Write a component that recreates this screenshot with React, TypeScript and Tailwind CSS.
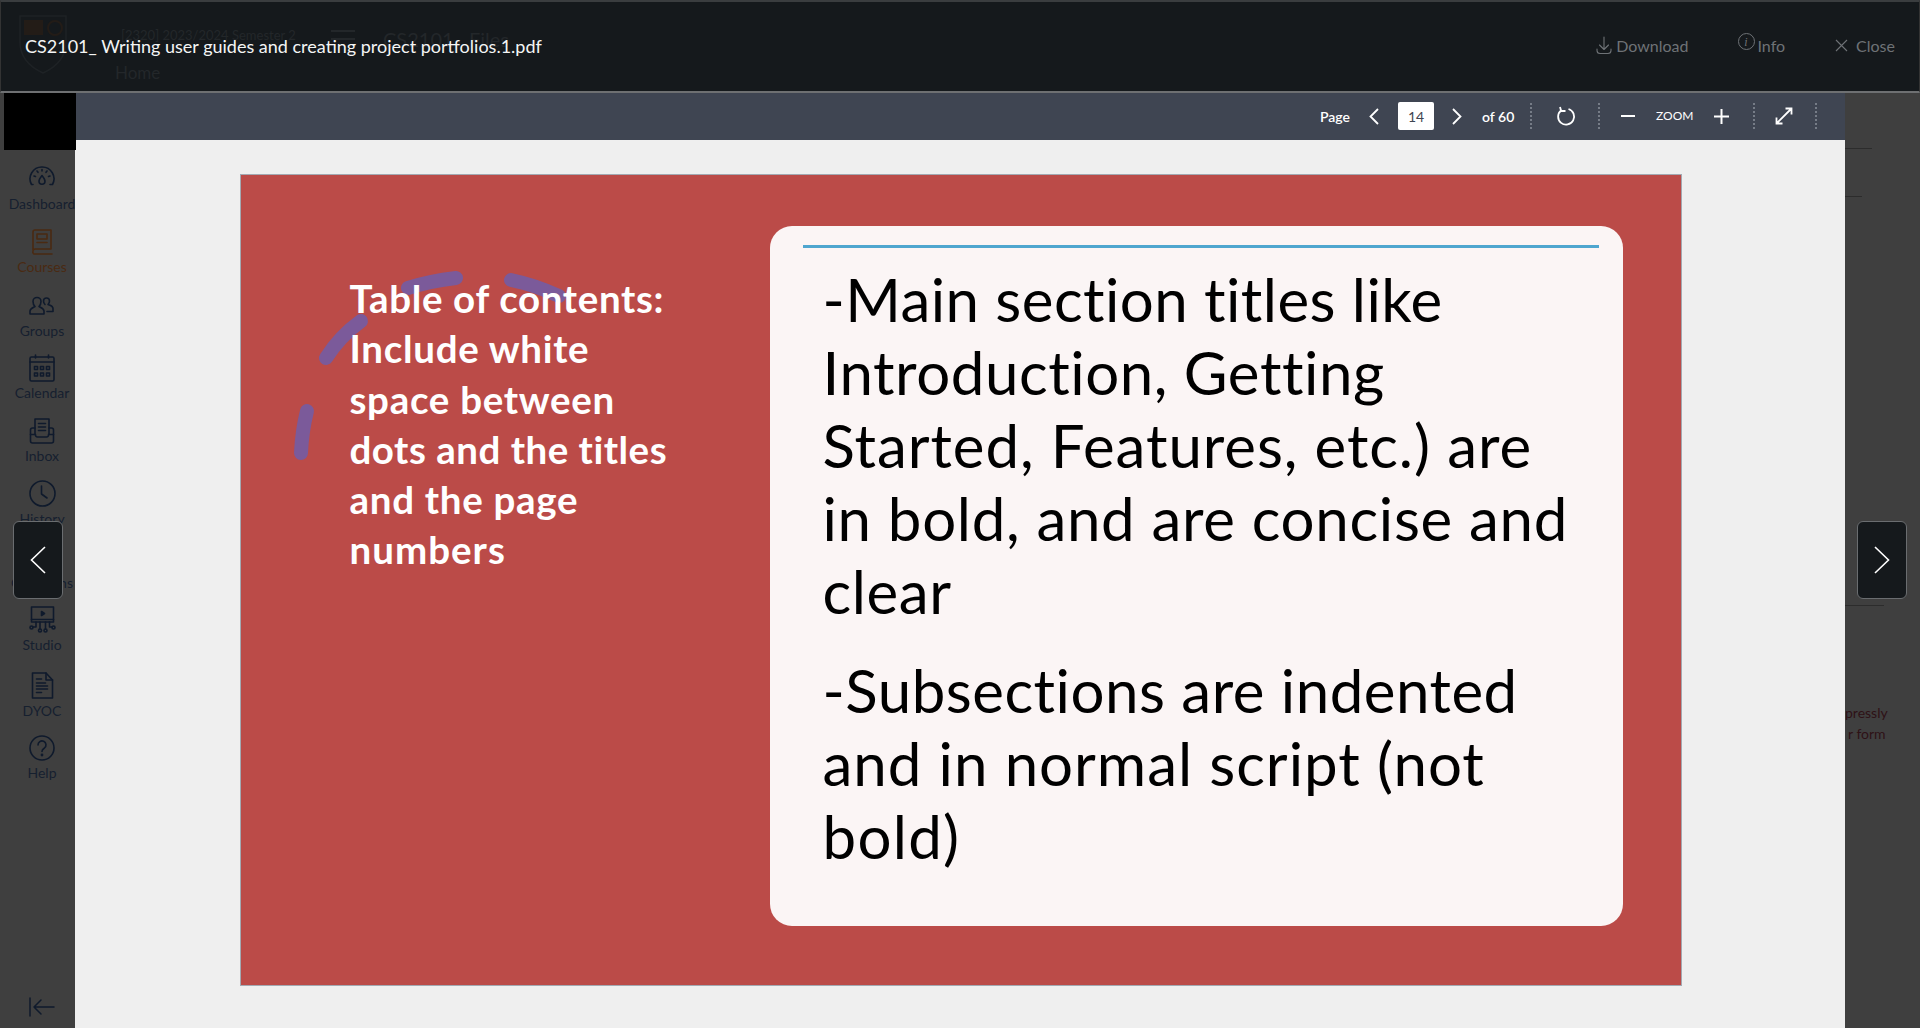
import React from "react";

const navy = "#0f1a2c";

function Svg({ children, w = 28, h = 28, box = "0 0 28 28", color = navy, sw = 1.6 }: { children: React.ReactNode; w?: number; h?: number; box?: string; color?: string; sw?: number }) {
  return (
    <svg width={w} height={h} viewBox={box} fill="none" stroke={color} strokeWidth={sw} strokeLinecap="round" strokeLinejoin="round">
      {children}
    </svg>
  );
}

const Dashboard = () => (
  <span className="relative -top-[3px] flex">
    <Svg w={26} h={20} box="0 0 26 20">
      <path d="M4 18.5h-1.5A11.8 11.8 0 0 1 13 1a11.8 11.8 0 0 1 10.500 17.500H21" />
      <path d="M13 9.500c-2 2.500-3 4.200-3 5.700a3 3 0 0 0 6 0c0-1.500-1-3.200-3-5.700z" />
      <path d="M5 10l1.500.5M8 5l1 1.300M13 3.500v1.500M18 5l-1 1.300M21 10l-1.500.5" />
    </Svg>
  </span>
);
const Courses = () => (
  <Svg w={22} h={26} box="0 0 22 26" color="#4a2a12">
    <path d="M2 21V3a2 2 0 0 1 2-2h16v19H4a2 2 0 0 0-2 2.200A2 2 0 0 0 4 25h17" />
    <rect x="6" y="5" width="10" height="5" />
    <path d="M6 13.500h10" />
  </Svg>
);
const Groups = () => (
  <span className="relative -top-[1px] flex">
    <Svg w={28} h={20} box="0 0 28 20">
      <path d="M2 19v-3c0-2.500 3-3.500 5-4.500-1.500-1.500-2-3-2-5a4 4 0 0 1 8 0c0 2-.5 3.500-2 5 2 1 5 2 5 4.500v3z" />
      <path d="M17 9.500c-1-1-1.500-2-1.500-3.500a3 3 0 0 1 6 0c0 1.500-.5 2.500-1.500 3.500 2 1 5 1.500 5 4v3h-6" />
    </Svg>
  </span>
);
const Calendar = () => (
  <Svg w={26} h={28} box="0 0 26 28">
    <rect x="1" y="3" width="24" height="24" rx="1.500" />
    <path d="M1 8h24M6.500 1v3M19.500 1v3" />
    <path d="M5.500 12.500h3v3h-3zM11.500 12.500h3v3h-3zM17.500 12.500h3v3h-3zM5.500 19h3v3h-3zM11.500 19h3v3h-3zM17.500 19h3v3h-3z" />
  </Svg>
);
const Inbox = () => (
  <Svg w={26} h={26} box="0 0 26 26">
    <path d="M6 16V1h14v15" />
    <path d="M9.500 5.500h7M9.500 9h7M9.500 12.500h7" />
    <path d="M6 10H3.500A2 2 0 0 0 1.500 12v11a2 2 0 0 0 2 2h19a2 2 0 0 0 2-2V12a2 2 0 0 0-2-2H20" />
    <path d="M1.500 16.500h5a2 2 0 0 0 2 2.500h9a2 2 0 0 0 2-2.500h5" />
  </Svg>
);
const History = () => (
  <Svg w={27} h={27} box="0 0 27 27">
    <circle cx="13.500" cy="13.500" r="12.500" />
    <path d="M12.500 6v8l5.500 4" />
  </Svg>
);
const Commons = () => (
  <Svg w={26} h={22} box="0 0 26 22">
    <path d="M14 1a10 10 0 1 0 0 20h0l-4-5h4a5 5 0 0 0 0-10h-4z" />
    <path d="M16 6l9 5-9 5" />
  </Svg>
);
const Studio = () => (
  <Svg w={27} h={27} box="0 0 27 27">
    <rect x="2.500" y="1" width="22" height="15" />
    <path d="M2.500 13.500h22" />
    <path d="M12.500 5.500l3 2-3 2z" fill={navy} />
    <path d="M7 16v5H3.500M11 16v7M16.500 16v7M20.500 16v5H23.500" />
    <circle cx="2.500" cy="21.500" r="1.500" />
    <circle cx="11" cy="24.500" r="1.500" />
    <circle cx="16.500" cy="24.500" r="1.500" />
    <circle cx="24.500" cy="21.500" r="1.500" />
  </Svg>
);
const Dyoc = () => (
  <Svg w={23} h={27} box="0 0 23 27">
    <path d="M1.500 1h13.500l6.500 7v18H1.500z" />
    <path d="M15 1v7h6.500" />
    <path d="M5.500 7h5M5.500 11h9M5.500 14h11M5.500 17h11M5.500 20.500h5" />
  </Svg>
);
const Help = () => (
  <Svg w={26} h={26} box="0 0 26 26">
    <circle cx="13" cy="13" r="12" />
    <path d="M9 10a4 4 0 1 1 6.500 3c-1.500 1-2.500 1.500-2.500 3.500" />
    <circle cx="13" cy="20" r=".6" fill={navy} />
  </Svg>
);

const items: { label: string; icon: React.ReactNode; cls: string; text?: string }[] = [
  { label: "Dashboard", icon: <Dashboard />, cls: "h-[63px]" },
  { label: "Courses", icon: <Courses />, cls: "h-[63px]", text: "text-[#4a2a12]" },
  { label: "Groups", icon: <Groups />, cls: "h-[63px] pt-[1px]" },
  { label: "Calendar", icon: <Calendar />, cls: "h-[63px]" },
  { label: "Inbox", icon: <Inbox />, cls: "h-[63px]" },
  { label: "History", icon: <History />, cls: "h-[63px]" },
  { label: "Commons", icon: <Commons />, cls: "h-[63px] pt-[1px]" },
  { label: "Studio", icon: <Studio />, cls: "h-[66px]" },
  { label: "DYOC", icon: <Dyoc />, cls: "h-[62px]" },
  { label: "Help", icon: <Help />, cls: "h-[63px]" },
];

const Dots = () => <span className="h-[26px] border-l-2 border-dotted border-[#767c87]" />;

export default function App() {
  return (
    <div className="relative h-[1028px] w-[1920px] overflow-hidden bg-[#3f3f3f] font-['Lato',sans-serif]">
      <header className="relative flex h-[93px] items-center justify-between border-t-2 border-b-2 border-l border-r border-t-[#3a3d3f] border-b-[#6e7072] border-l-[#333] border-r-[#333] bg-[#15191c] pb-[2px] pl-[24px] pr-[24px]">
        {/* dimmed page behind the overlay */}
        <svg className="absolute left-[18px] top-[13px]" width="48" height="60" viewBox="0 0 48 60" fill="none">
          <path d="M1 1h46v26c0 15-10 25-23 31C11 52 1 42 1 27z" stroke="#1e2225" strokeWidth="1.500" />
          <rect x="5" y="5" width="19" height="15" fill="#231c17" />
          <circle cx="36" cy="13" r="7" stroke="#231c17" strokeWidth="2" />
        </svg>
        <span className="absolute left-[120px] top-[24px] text-[13px] text-[#23272a]">[2320] 2023/2024 Semester 2</span>
        <span className="absolute left-[330px] top-[28px] h-[10px] w-[24px] border-y-2 border-[#23272a]" />
        <span className="absolute left-[382px] top-[22px] text-[20px] text-[#23272a]">CS2101</span>
        <span className="absolute left-[468px] top-[22px] text-[20px] text-[#23272a]">Files</span>
        <span className="absolute left-[114px] top-[58px] text-[17px] text-[#23272a]">Home</span>

        <h1 className="relative text-[18px] font-normal leading-[24px] text-[#f4f5f5]">CS2101_ Writing user guides and creating project portfolios.1.pdf</h1>
        <div className="relative flex items-center text-[16px] text-[#6e7276]">
          <span className="flex items-center">
            <svg width="16" height="19" viewBox="0 0 16 19" fill="none" stroke="#6e7276" strokeWidth="1.100" strokeLinecap="round" strokeLinejoin="round">
              <path d="M8 1v12M3.500 9l4.500 4.500 4.500-4.500M1 13v1.500a3 3 0 0 0 3 3h8a3 3 0 0 0 3-3V13" />
            </svg>
            <span className="ml-[4px]">Download</span>
          </span>
          <span className="ml-[49px] flex items-center">
            <span className="relative -top-[4px] flex h-[17px] w-[17px] items-center justify-center rounded-full border border-[#6e7276] font-['Liberation_Serif',serif] text-[12px] italic">i</span>
            <span className="ml-[3px]">Info</span>
          </span>
          <span className="ml-[50px] flex items-center">
            <svg width="13" height="13" viewBox="0 0 13 13" stroke="#6e7276" strokeWidth="1.100"><path d="M1 1l11 11M12 1L1 12" /></svg>
            <span className="ml-[8px]">Close</span>
          </span>
        </div>
      </header>

      <div className="flex h-[935px]">
        <nav className="flex w-[75px] shrink-0 flex-col items-center pl-[9px] pt-[71px] text-[14px] leading-[18px] text-[#16202f]">
          {items.map((it) => (
            <div key={it.label} className={`flex w-full shrink-0 flex-col items-center ${it.cls} ${it.text ?? ""}`}>
              <span className="flex h-[29px] items-center">{it.icon}</span>
              <span className="mt-[2px] whitespace-nowrap">{it.label}</span>
            </div>
          ))}
          <div className="mt-auto mb-[11px]">
            <svg width="26" height="20" viewBox="0 0 26 20" fill="none" stroke={navy} strokeWidth="1.500" strokeLinecap="round" strokeLinejoin="round">
              <path d="M1 1v18M25 10H5M12 3l-7 7 7 7" />
            </svg>
          </div>
        </nav>

        <main className="flex w-[1770px] shrink-0 flex-col">
          <div className="flex h-[47px] shrink-0 items-center bg-[#3f4552] pb-[1px] pl-[1245px] text-[14px] text-white">
            <span className="w-[30px] whitespace-nowrap font-semibold">Page</span>
            <svg className="ml-[19px]" width="10" height="17" viewBox="0 0 10 17" fill="none" stroke="#fff" strokeWidth="1.800"><path d="M9 1L1.500 8.500 9 16" /></svg>
            <span className="ml-[19px] flex h-[28px] w-[36px] items-center justify-center rounded-[2px] bg-white text-[#3f4552]">14</span>
            <svg className="ml-[18px]" width="10" height="17" viewBox="0 0 10 17" fill="none" stroke="#fff" strokeWidth="1.800"><path d="M1 1l7.500 7.500L1 16" /></svg>
            <span className="ml-[20px] w-[32px] whitespace-nowrap font-semibold">of 60</span>
            <span className="ml-[16px] flex"><Dots /></span>
            <svg className="ml-[25px]" width="19" height="21" viewBox="0 0 19 21" fill="none" stroke="#fff" strokeWidth="1.800"><path d="M4 4.500a8 8 0 1 0 7.500-1.500" /><path d="M3 1l1.200 4h4.300" /></svg>
            <span className="ml-[22px] flex"><Dots /></span>
            <span className="ml-[21px] h-[2px] w-[14px] bg-white" />
            <span className="ml-[21px] w-[38px] whitespace-nowrap text-[12px]">ZOOM</span>
            <svg className="ml-[20px]" width="15" height="15" viewBox="0 0 15 15" stroke="#fff" strokeWidth="2"><path d="M7.500 0v15M0 7.500h15" /></svg>
            <span className="ml-[24px] flex"><Dots /></span>
            <svg className="ml-[20px]" width="18" height="18" viewBox="0 0 18 18" fill="none" stroke="#fff" strokeWidth="1.800"><path d="M1.500 16.500l15-15M10.500 1.500h6v6M1.500 10.500v6h6" /></svg>
            <span className="ml-[22px] flex"><Dots /></span>
          </div>

          <div className="flex flex-1 justify-center bg-[#efefef] pl-[1px] pt-[34px]">
            <section className="relative flex h-[812px] w-[1442px] items-start border border-[#a3a9b2] bg-[#bb4b48]">
              <svg className="absolute left-[49px] top-[96px]" width="280" height="200" viewBox="0 0 280 200" fill="none" stroke="#7b5a9a" strokeWidth="14" strokeLinecap="round">
                <path d="M36 87Q50 65 71 50" />
                <path d="M118 17Q140 10 166 7" />
                <path d="M221 9Q245 14 269 25" />
                <path d="M17 140Q12 160 11 182" />
              </svg>
              <div className="relative ml-[109px] mt-[98px] w-[340px] whitespace-nowrap text-[38.5px] font-bold leading-[50.300px] tracking-[0.700px] text-white">
                <p className="tracking-[0.650px]">Table of contents:</p>
                <p>Include white</p>
                <p>space between</p>
                <p className="tracking-[0.500px]">dots and the titles</p>
                <p>and the page</p>
                <p className="tracking-[1px]">numbers</p>
              </div>
              <div className="absolute left-[529px] top-[51px] flex h-[700px] w-[853px] flex-col rounded-[22px] bg-[#fbf5f5] pl-[33px] pr-[24px] pt-[19px]">
                <div className="h-[3px] bg-[#4fa6cf]" />
                <div className="whitespace-nowrap pl-[20px] pt-[15px] text-[60px] leading-[73px] tracking-[0.600px] text-black">
                  <p className="tracking-[0.450px]">-Main section titles like</p>
                  <p className="tracking-[0.550px]">Introduction, Getting</p>
                  <p className="tracking-[0.920px]">Started, Features, etc.) are</p>
                  <p className="tracking-[0.700px]">in bold, and are concise and</p>
                  <p>clear</p>
                  <p className="mt-[26px] tracking-[0.500px]">-Subsections are indented</p>
                  <p className="tracking-[0.950px]">and in normal script (not</p>
                  <p className="tracking-[1.300px]">bold)</p>
                </div>
              </div>
            </section>
          </div>
        </main>

        <aside className="relative flex-1 text-[14px] leading-[21px] text-[#2e1116]">
          <div className="absolute left-0 top-[55px] h-px w-[27px] bg-[#2c2c2c]" />
          <div className="absolute left-0 top-[103px] h-px w-[17px] bg-[#2c2c2c]" />
          <div className="absolute left-0 top-[512px] h-px w-[39px] bg-[#2c2c2c]" />
          <span className="absolute left-0 top-[609px] whitespace-nowrap">pressly</span>
          <span className="absolute left-[3px] top-[630px] whitespace-nowrap">r form</span>
        </aside>
      </div>

      <div className="absolute left-[4px] top-[93px] h-[57px] w-[72px] bg-black" />
      <button className="absolute left-[13px] top-[521px] flex h-[78px] w-[50px] items-center justify-center rounded-[6px] border border-[#6a6d70] bg-[#15191c]">
        <svg width="16" height="28" viewBox="0 0 16 28" fill="none" stroke="#fff" strokeWidth="1.600"><path d="M15 1L1.500 14 15 27" /></svg>
      </button>
      <button className="absolute left-[1857px] top-[521px] flex h-[78px] w-[50px] items-center justify-center rounded-[6px] border border-[#6a6d70] bg-[#15191c]">
        <svg width="16" height="28" viewBox="0 0 16 28" fill="none" stroke="#fff" strokeWidth="1.600"><path d="M1 1l13.500 13L1 27" /></svg>
      </button>
    </div>
  );
}
